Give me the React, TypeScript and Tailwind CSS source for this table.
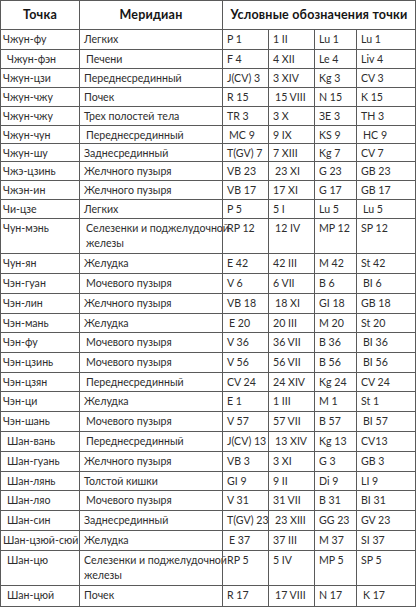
import React from "react";

type Row = [string, string, string, string, string, string, number];

const rows: Row[] = [
  ["Чжун-фу", "Легких", "P 1", "1 II", "Lu 1", "Lu 1", 20],
  [" Чжун-фэн", " Печени", "F 4", "4 XII", "Le 4", "Liv 4", 19],
  ["Чжун-цзи", "Переднесрединный", "J(CV) 3", "3 XIV", "Kg 3", "CV 3", 19],
  ["Чжун-чжу", "Почек", "R 15", " 15 VIII", "N 15", "K 15", 19],
  ["Чжун-чжу", "Трех полостей тела", "TR 3", "3 X", "ЗE 3", "TH 3", 19],
  ["Чжун-чун", " Переднесрединный", " MC 9", "9 IX", "KS 9", " HC 9", 18],
  ["Чжун-шу", "Заднесрединный", "T(GV) 7", "7 XIII", "Kg 7", "CV 7", 18],
  ["Чжэ-цзинь", "Желчного пузыря", "VB 23", " 23 XI", "G 23", "GB 23", 19],
  ["Чжэн-ин", "Желчного пузыря", "VB 17", "17 XI", "G 17", "GB 17", 19],
  ["Чи-цзе", "Легких", "P 5", "5 I", "Lu 5", " Lu 5", 19],
  ["Чун-мэнь", " Селезенки и поджелудочной\nжелезы", "RP 12", " 12 IV", "MP 12", "SP 12", 35],
  ["Чун-ян", "Желудка", "E 42", "42 III", "M 42", "St 42", 20],
  ["Чэн-гуан", " Мочевого пузыря", "V 6", "6 VII", "B 6", " BI 6", 20],
  ["Чэн-лин", "Желчного пузыря", "VB 18", " 18 XI", "GI 18", "GB 18", 20],
  ["Чэн-мань", "Желудка", " E 20", "20 III", "M 20", "St 20", 19],
  ["Чэн-фу", " Мочевого пузыря", "V 36", "36 VII", "B 36", " BI 36", 20],
  ["Чэн-цзинь", " Мочевого пузыря", "V 56", "56 VII", "B 56", " BI 56", 20],
  ["Чэн-цзян", " Переднесрединный", "CV 24", "24 XIV", "Kg 24", "CV 24", 19],
  ["Чэн-ци", "Желудка", "E 1", "1 III", "M 1", "St 1", 20],
  ["Чэн-шань", " Мочевого пузыря", "V 57", "57 VII", "B 57", " BI 57", 20],
  [" Шан-вань", " Переднесрединный", "J(CV) 13", " 13 XIV", "Kg 13", "CV13", 20],
  [" Шан-гуань", "Желчного пузыря", "VB 3", "3 XI", "G 3", "GB 3", 20],
  [" Шан-лянь", "Толстой кишки", "GI 9", "9 II", "Di 9", "LI 9", 19],
  [" Шан-ляо", " Мочевого пузыря", "V 31", "31 VII", "B 31", "BI 31", 20],
  [" Шан-син", "Заднесрединный", "T(GV) 23", " 23 XIII", "GG 23", "GV 23", 20],
  ["Шан-цзюй-сюй", "Желудка", " E 37", "37 III", "M 37", "SI 37", 20],
  [" Шан-цю", "Селезенки и поджелудочной\nжелезы", "RP 5", "5 IV", "MP 5", "SP 5", 35],
  [" Шан-цюй", "Почек", "R 17", " 17 VIII", "N 17", " K 17", 21],
];

const widths = ["w-[79px]", "w-[143px]", "w-[46px]", "w-[46px]", "w-[42px]", "w-[60px]"];

function Cell({ text, col }: { text: string; col: number }) {
  const indented = text.startsWith(" ");
  const t = indented ? text.slice(1) : text;
  const pad =
    col === 0
      ? indented
        ? "pl-[6px]"
        : "pl-[2px]"
      : indented
        ? "pl-[6px]"
        : "pl-[4px]";
  return (
    <div
      className={`${widths[col]} shrink-0 border-l border-[#5a5a5a] ${col === 5 ? "border-r" : ""} ${pad} pt-[2px] whitespace-pre overflow-visible`}
    >
      {t}
    </div>
  );
}

export default function App() {
  return (
    <div
      className="w-[418px] h-[607px] bg-white overflow-hidden text-[#2e2e2e]"
      style={{ fontFamily: "Lato, 'Liberation Sans', sans-serif" }}
    >
      <div className="w-[416px] border-b border-[#5a5a5a]">
        <div className="flex h-[29px] border-t border-[#5a5a5a] font-bold text-[12.5px] text-[#151515] tracking-[0.2px]">
          <div className="w-[79px] shrink-0 border-l border-[#5a5a5a] flex items-center justify-center">Точка</div>
          <div className="w-[143px] shrink-0 border-l border-[#5a5a5a] flex items-center justify-center">Меридиан</div>
          <div className="flex-1 border-l border-r border-[#5a5a5a] flex items-center justify-center">
            Условные обозначения точки
          </div>
        </div>
        {rows.map((r, i) => (
          <div
            key={i}
            className="flex border-t border-[#5a5a5a] text-[10.6px] leading-[15px]"
            style={{ height: r[6] }}
          >
            {r.slice(0, 6).map((c, j) => (
              <Cell key={j} text={c as string} col={j} />
            ))}
          </div>
        ))}
      </div>
    </div>
  );
}
